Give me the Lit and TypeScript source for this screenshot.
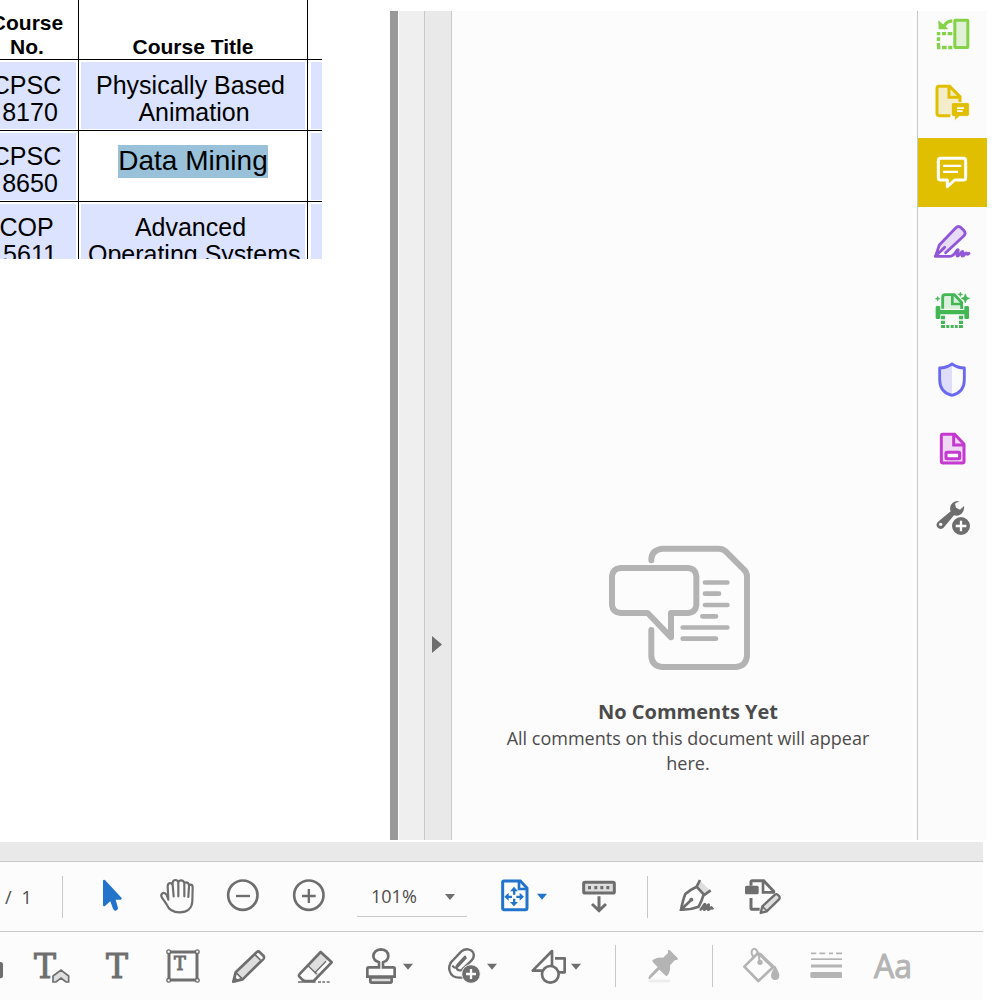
import { LitElement, html, css, svg, nothing, type SVGTemplateResult } from "lit";
import { customElement, property, state } from "lit/decorators.js";

interface Tool {
  label: string;
  icon?: SVGTemplateResult;
  box?: string;
  kind?: "wide" | "edge" | "muted" | "separator" | "zoom" | "glyph";
}

const caret = (x: number, y: number) => svg`<path fill="currentColor" d="M${x} ${y}h30l-15 18z"/>`;

/* ---------- right rail ---------- */

const organize = svg`
  <rect x="134.500" y="60.500" width="39" height="82" rx="2" fill="#e1f1d7" stroke="#85d147" stroke-width="9"/>
  <g stroke="#85d147" stroke-width="10" fill="none">
    <path d="M81 101h10M96 101h12M113 101h14M85.500 97v9M85.500 112v11M85.500 129v10M81 142.500h10M96 142.500h14M115 142.500h12"/>
    <path d="M127 62.500C114 63 107 68 101 80"/>
  </g>
  <path d="M85 61l1 27h30z" fill="#85d147"/>`;

const requestComments = svg`
  <path d="M121 347H87q-6 0-6-7V265q0-6 6-6h32l31 31v16" fill="#f4edcb" stroke="#dfbf00" stroke-width="9"/>
  <path d="M117 259v33h34" fill="none" stroke="#dfbf00" stroke-width="9"/>
  <path d="M129 308h44q5 0 5 5v30q0 6-5 6h-25l-14 13v-13h-5q-5 0-5-6v-30q0-5 5-5z" fill="#dfbf00" stroke="#fbfbfb" stroke-width="2"/>
  <path d="M141 324.500h21M141 333.500h17" stroke="#fff" stroke-width="5"/>`;

const comment = svg`
  <path d="M92 475h68q7 0 7 7v51q0 7-7 7h-26l-22 20v-20H92q-7 0-7-7v-51q0-7 7-7z" fill="none" stroke="#fff" stroke-width="9" stroke-linejoin="round"/>
  <path d="M99 497.500h55M99 515.500h45" stroke="#fff" stroke-width="7"/>`;

const sign = svg`
  <path d="M88 122l50-53q8-9 17-1l7 7q9 8 1 16l-54 53-12-4z" fill="#e6dcf6"/>
  <path d="M77 153l11-33 49-51q8-8 16-1l8 8q8 8 1 16l-55 51M77 153l27-26" fill="none" stroke="#9256d9" stroke-width="8.500" stroke-linejoin="round" stroke-linecap="round"/>
  <path d="M76 154h43c16 0 19-20 24-20 6 0-7 19 0 19 5 0 10-14 14-14 6 0-6 14 1 14 5 0 7-9 11-9 3 0 0 8 8 1" fill="none" stroke="#9256d9" stroke-width="8.500" stroke-linecap="round"/>`;

const scan = svg`
  <path d="M98 311v-34q0-8 8-8h27l22 24v19" fill="#dcefdd" stroke="#43b754" stroke-width="8.500"/>
  <path d="M127 270v27h28" fill="none" stroke="#43b754" stroke-width="8"/>
  <path d="M81 303h6q4 0 4 4v8h72v-8q0-4 4-4h6q4 0 4 4v31q0 4-4 4h-6q-4 0-4-4v-10H91v10q0 4-4 4h-6q-4 0-4-4v-31q0-4 4-4z" fill="#43b754"/>
  <path d="M93 332h12v11H93zM147 332h12v11h-12zM93 347h12v10H93zM147 347h12v10h-12zM93 360h12v9H93zM109 360h9v9h-9zM122 360h9v9h-9zM135 360h8v9h-8zM147 360h12v9h-12z" fill="#43b754"/>
  <path d="M166 266l4 10 9 4-9 4-4 10-4-10-9-4 9-4zM151 261l2 5 5 2-5 2-2 5-2-5-5-2 5-2zM83 274l2 5 5 2-5 2-2 6-2-6-5-2 5-2z" fill="#43b754" stroke="#43b754" stroke-width="1.500"/>`;

const protect = svg`
  <path d="M126 477v95C103 565 89 549 89 524v-36c14 0 27-3 37-11z" fill="#dedefa"/>
  <path d="M126 477c10 7 23 12 37 12v35c0 24-14 41-37 47-23-6-37-23-37-47v-35c14 0 27-5 37-12z" fill="none" stroke="#6a68ee" stroke-width="8.500" stroke-linejoin="round"/>`;

const fillForm = svg`
  <path d="M98 58h36l28 29v52q0 5-5 5H99q-5 0-5-5V63q0-5 4-5z" fill="#efd8f2" stroke="#c439cf" stroke-width="9"/>
  <path d="M131 59v31h32" fill="none" stroke="#c439cf" stroke-width="9"/>
  <rect x="108" y="112" width="41" height="19" rx="3" fill="#fff" stroke="#c439cf" stroke-width="9"/>`;

const moreTools = svg`
  <path d="M148 258q-18-1-25 12-5 10-1 19l-38 31q-8 8-2 17 8 9 18 2l32-38q12 4 22-4 10-9 8-24l-12 11-12-6-3-12z" fill="#6e6e6e"/>
  <circle cx="92" cy="328" r="5" fill="#fbfbfb"/>
  <circle cx="153" cy="333" r="29" fill="#6e6e6e" stroke="#fbfbfb" stroke-width="4"/>
  <path d="M137 333h32M153 317v32" stroke="#fff" stroke-width="7"/>`;

/* ---------- navigation toolbar ---------- */

const pointer = svg`<path d="M310 150q4-2 7 2l48 52q2 4-3 5h-15l7 25q0 6-7 8-5 1-8-6l-8-22-16 14q-6 3-6-4v-70q0-3 1-4z" fill="#2173cc"/>`;
const hand = svg`
  <path d="M505 209l-2-40q0-9 7-10 6 0 8 7v-8q1-8 8-8 8 0 9 8 1-7 9-7 7 0 9 9 1-3 5-3 8 0 9 10 2-3 5-3 6 0 6 9l-1 41c-1 20-15 33-38 33-21 0-33-8-39-24l-14-20q-5-8 1-13 7-4 13 5zM518 165l3 34M535 158v41M553 161v38M567 170l-2 31" fill="#fcfcfc" stroke="#6e6e6e" stroke-width="6.500" stroke-linejoin="round" stroke-linecap="round"/>`;
const zoomOut = svg`
  <circle cx="728.500" cy="195.500" r="44" fill="none" stroke="#6e6e6e" stroke-width="8"/>
  <path d="M708 198h42" stroke="#6e6e6e" stroke-width="7"/>`;
const zoomIn = svg`
  <circle cx="926.500" cy="195.500" r="44" fill="none" stroke="#6e6e6e" stroke-width="8"/>
  <path d="M906 198h41M926.500 177v42" stroke="#6e6e6e" stroke-width="7"/>`;
const fitPage = svg`
  <path d="M492 63h49l20 21v59q0 6-5 6h-64q-4 0-4-4V67q0-4 4-4z" fill="none" stroke="#2173cc" stroke-width="9"/>
  <path d="M537 61v26h27" fill="none" stroke="#2173cc" stroke-width="8"/>
  <path d="M522 80l12 14h-8v10h-7v-10h-9zM522 139l-12-13h9v-10h7v10h8zM493 110l13-12v9h10v7h-10v8zM552 110l-13-12v9h-10v7h10v8z" fill="#2173cc"/>
  <g color="#2173cc">${caret(591, 101)}</g>`;
const keyboard = svg`
  <rect x="731" y="67" width="92" height="32" rx="4" fill="#dedede" stroke="#6e6e6e" stroke-width="9"/>
  <path d="M744 83h9M763 83h9M781 83h9M799 83h9" stroke="#6e6e6e" stroke-width="10"/>
  <path d="M777 109v41M756 132l21 20 21-20" fill="none" stroke="#6e6e6e" stroke-width="9"/>`;
const fountainPen = svg`
  <path d="M208 153l28 27-12 14-28-25z" fill="#dedede"/>
  <path d="M207 150l-10 20q-18 8-34 22-7 17-13 47 28 1 53-9 9-17 14-33l22-16M196 169l25 27M150 239l28-27" fill="none" stroke="#6e6e6e" stroke-width="8"/>
  <circle cx="181" cy="209" r="6" fill="#6e6e6e"/>
  <path d="M206 239c8 0 12-17 15-17 4 0-5 17-1 17 5 0 9-15 12-15 4 0-5 15 0 15s6-7 9-7c2 0-1 7 6 1" fill="none" stroke="#6e6e6e" stroke-width="8"/>`;
const editPage = svg`
  <path d="M360 167v-11q0-4 4-4h34l30 32v6M360 204v30q0 4 4 4h22" fill="none" stroke="#6e6e6e" stroke-width="9"/>
  <path d="M396 152v35h34" fill="none" stroke="#6e6e6e" stroke-width="8"/>
  <rect x="342" y="167" width="41" height="26" rx="5" fill="#6e6e6e"/>
  <path d="M389 249l5-20 38-35q5-4 9 1l3 3q4 5 0 10l-37 36z" fill="#dedede" stroke="#6e6e6e" stroke-width="7" stroke-linejoin="round"/>
  <path d="M394 229l14 14" stroke="#6e6e6e" stroke-width="5"/>`;

/* ---------- comment toolbar ---------- */

const highlighter = svg`<path d="M-12 396H2q7 0 7 7v35q0 7-7 7H-12z" fill="#6e6e6e"/>`;
const insertText = svg`
  <text class="letter" x="135" y="443" font-size="99" text-anchor="middle">T</text>
  <path d="M159 456v-18l24-18 23 18v18h-8l-15-12-15 12z" fill="#dedede" stroke="#6e6e6e" stroke-width="5"/>`;
const addText = svg`<text class="letter" x="351" y="443" font-size="99" text-anchor="middle">T</text>`;
const textBox = svg`
  <rect x="507" y="366" width="84" height="84" fill="none" stroke="#6e6e6e" stroke-width="9"/>
  <g fill="#fff" stroke="#6e6e6e" stroke-width="4"><circle cx="506" cy="365" r="5.500"/><circle cx="592" cy="365" r="5.500"/><circle cx="506" cy="451" r="5.500"/><circle cx="592" cy="451" r="5.500"/></g>
  <text class="letter" x="540" y="420" font-size="53" text-anchor="middle">T</text>`;
const pencil = svg`
  <path d="M700 455l7-28 63-60q5-5 10 0l10 10q4 5 0 10l-62 61z" fill="#dedede" stroke="#6e6e6e" stroke-width="8" stroke-linejoin="round"/>
  <path d="M708 428l18 18-15 4-6-6z" fill="#fcfcfc" stroke="#6e6e6e" stroke-width="5"/>
  <path d="M771 371l16 15" stroke="#fcfcfc" stroke-width="6"/>
  <path d="M765 374l16 16" stroke="#6e6e6e" stroke-width="5"/>
  <path d="M697 458l4-16 12 11z" fill="#6e6e6e"/>`;
const eraser = svg`
  <path d="M923 405l39-38 32 31-44 43z" fill="#dedede"/>
  <path d="M953 428l36-37" stroke="#fcfcfc" stroke-width="10"/>
  <path d="M924 407l26 25M946 427l32-33" fill="none" stroke="#6e6e6e" stroke-width="4"/>
  <path d="M898 433l64-67 33 31-54 56h-25q-6 0-9-4l-9-9q-3-4 0-7z" fill="none" stroke="#6e6e6e" stroke-width="8" stroke-linejoin="round"/>
  <path d="M894 456h53M954 456h9M967 456h8M980 456h9" stroke="#6e6e6e" stroke-width="5"/>`;
const stamp = svg`
  <path d="M117 322v-15q-17-6-17-19 2-19 23-20 21 1 22 20 0 13-16 19v15h31q4 0 4 4v24H82v-24q0-4 4-4z" fill="none" stroke="#6e6e6e" stroke-width="8"/>
  <path d="M91 352h64v12q0 4-4 4H95q-4 0-4-4z" fill="#dedede" stroke="#6e6e6e" stroke-width="8"/>${caret(189, 311)}`;
const attach = svg`
  <path d="M354 313l21-21M377 294l-24 25q-8 8-14 0M336 303q-12 15-7 30 6 20 29 20h10M331 309l33-35q9-7 20-6 14 2 17 14 2 11-6 19l-29 28q-8 5-14-1-5-7 1-14l22-24" fill="none" stroke="#6e6e6e" stroke-width="7" stroke-linecap="round" stroke-linejoin="round"/>
  <circle cx="393" cy="342" r="28" fill="#6e6e6e" stroke="#fcfcfc" stroke-width="3"/>
  <path d="M378 342h30M393 327v30" stroke="#fff" stroke-width="7"/>${caret(441, 311)}`;
const shapes = svg`
  <path d="M636 330v-57l-58 59h30M645 295h29v42h-18" fill="none" stroke="#6e6e6e" stroke-width="8" stroke-linejoin="round"/>
  <circle cx="631" cy="343" r="25" fill="#fcfcfc" stroke="#6e6e6e" stroke-width="8"/>${caret(693, 311)}`;
const pin = svg`
  <path d="M114 361q5-2 8 2l20 20q3 4 0 7h-7l-15 16q3 16-7 30-4 4-8-1l-17-16-28 28h-5l2-9 26-27-14-14q-5-5 0-8 14-8 30-6l15-14z" fill="#b4b4b4"/>
  <path d="M60 453h57" stroke="#ededed" stroke-width="9" stroke-linecap="round"/>`;
const bucket = svg`
  <path d="M384 369l45 43-44 41-42-43z" fill="none" stroke="#b4b4b4" stroke-width="8" stroke-linejoin="round"/>
  <path d="M371 382q-9-12-5-21 7-9 14 0 7 12 9 34" fill="none" stroke="#b4b4b4" stroke-width="6"/>
  <circle cx="390" cy="397" r="8" fill="#b4b4b4"/>
  <path d="M391 367l47 45v10l-48-48z" fill="#b4b4b4"/>
  <path d="M436 408q12 20 12 29 0 12-12 13-13-1-13-13 0-9 13-29z" fill="#b4b4b4"/>`;
const lineWeight = svg`
  <path d="M543 370h16M568 370h18M597 370h12M618 370h18" stroke="#b4b4b4" stroke-width="5"/>
  <path d="M543 387.500h93" stroke="#b4b4b4" stroke-width="5"/>
  <path d="M543 408h93" stroke="#b4b4b4" stroke-width="9"/>
  <rect x="541" y="426" width="95" height="18" rx="4" fill="#b4b4b4"/>`;

const railTools: Tool[] = [
  { label: "Organize Pages", icon: organize, box: "69 45 117 117" },
  { label: "Send for Comments", icon: requestComments, box: "69 252 117 117" },
  { label: "Comment", icon: comment, box: "69 459 117 117" },
  { label: "Fill & Sign", icon: sign, box: "69 51 117 117" },
  { label: "Scan & OCR", icon: scan, box: "69 258 117 117" },
  { label: "Protect", icon: protect, box: "69 465 117 117" },
  { label: "Prepare Form", icon: fillForm, box: "69 42 117 117" },
  { label: "More Tools", icon: moreTools, box: "69 249 117 117" },
];

const navTools: Tool[] = [
  { label: "Select", icon: pointer, box: "273 141 120 117" },
  { label: "Pan", icon: hand, box: "471 141 120 117" },
  { label: "Zoom Out", icon: zoomOut, box: "669 141 120 117" },
  { label: "Zoom In", icon: zoomIn, box: "867 141 120 117" },
  { label: "Zoom level", kind: "zoom" },
  { label: "Fit Page", icon: fitPage, box: "462 51 180 117", kind: "wide" },
  { label: "Show Keyboard", icon: keyboard, box: "717 51 120 117" },
  { label: "", kind: "separator" },
  { label: "Sign", icon: fountainPen, box: "135 141 120 117" },
  { label: "Edit Page", icon: editPage, box: "333 141 120 117" },
];

const commentTools: Tool[] = [
  { label: "Highlight", icon: highlighter, box: "-45 348 54 120", kind: "edge" },
  { label: "Insert Text", icon: insertText, box: "93 348 120 120" },
  { label: "Add Text", icon: addText, box: "291 348 120 120" },
  { label: "Text Box", icon: textBox, box: "489 348 120 120" },
  { label: "Pencil", icon: pencil, box: "687 348 120 120" },
  { label: "Eraser", icon: eraser, box: "885 348 120 120" },
  { label: "Stamp", icon: stamp, box: "60 258 180 120", kind: "wide" },
  { label: "Attach File", icon: attach, box: "312 258 180 120", kind: "wide" },
  { label: "Shapes", icon: shapes, box: "564 258 180 120", kind: "wide" },
  { label: "", kind: "separator" },
  { label: "Keep Tool Selected", icon: pin, box: "42 348 120 120" },
  { label: "", kind: "separator" },
  { label: "Fill Colour", icon: bucket, box: "333 348 120 120" },
  { label: "Line Weight", icon: lineWeight, box: "531 348 120 120" },
  { label: "Text Properties", kind: "glyph" },
];

@customElement("course-table")
class CourseTable extends LitElement {
  static styles = css`
    :host { display: block; overflow: hidden; width: 322px; height: 259px; }
    .courses {
      table-layout: fixed; width: 408px; margin-left: -24px;
      border-spacing: 0; text-align: center; color: #000;
      font: 25px/27px "Liberation Sans", Arial, sans-serif;
    }
    .number { width: 103px; }
    .title { width: 229px; }
    th {
      height: 60px; box-sizing: border-box; padding: 0; vertical-align: bottom;
      font-size: 21px; line-height: 24px; font-weight: bold;
    }
    th, td { border-right: 1px solid #000; border-bottom: 1px solid #000; }
    td { padding: 2px 2px 1px; vertical-align: top; }
    td:last-child { padding-left: 3px; }
    .field { box-sizing: border-box; height: 67px; padding-top: 10px; background: #dbe3ff; white-space: nowrap; }
    .code { padding-right: 1px; }
    .name { padding-right: 5px; }
    .editing { background: none; padding-top: 12px; }
    .selected { display: inline-block; padding-bottom: 2px; background: #99c1da; font-size: 28px; line-height: 31px; }
  `;

  render() {
    return html`<table class="courses">
      <colgroup><col class="number" /><col class="title" /><col /></colgroup>
      <thead><tr><th scope="col">Course<br />No.</th><th scope="col">Course Title</th><th></th></tr></thead>
      <tbody>
        <tr>
          <td><div class="field code">CPSC<br />&nbsp;8170</div></td>
          <td><div class="field name">Physically Based<br />&nbsp;Animation</div></td>
          <td><div class="field"></div></td>
        </tr>
        <tr>
          <td><div class="field code">CPSC<br />&nbsp;8650</div></td>
          <td><div class="field editing"><span class="selected">Data Mining</span></div></td>
          <td><div class="field"></div></td>
        </tr>
        <tr>
          <td><div class="field code">COP<br />&nbsp;5611</div></td>
          <td><div class="field name">Advanced<br />&nbsp;Operating Systems</div></td>
          <td><div class="field"></div></td>
        </tr>
      </tbody>
    </table>`;
  }
}

@customElement("tool-rail")
class ToolRail extends LitElement {
  @state() private active = "Comment";

  static styles = css`
    :host { display: block; overflow: hidden; border-left: 1px solid #c8c8c8; background: #fbfbfb; }
    .tools { display: flex; flex-direction: column; margin-top: -11px; }
    .tool { width: 69px; height: 69px; padding: 0; border: 0; background: none; display: grid; place-items: center; }
    .active { background: #dfbf00; }
    .icon { width: 39px; height: 39px; display: block; }
  `;

  render() {
    return html`<nav class="tools" aria-label="Tools">
      ${railTools.map(
        (t) => html`<button
          class="tool ${t.label === this.active ? "active" : ""}"
          aria-label=${t.label}
          @click=${() => (this.active = t.label)}
        ><svg class="icon" viewBox=${t.box!}>${t.icon}</svg></button>`
      )}
    </nav>`;
  }
}

@customElement("tool-bar")
class ToolBar extends LitElement {
  @property({ attribute: false }) tools: Tool[] = [];

  static styles = css`
    :host {
      display: flex; align-items: center; background: #fcfcfc; color: #6e6e6e;
      font-family: "Open Sans", "Noto Sans", sans-serif;
    }
    .tool { flex: none; width: 66px; height: 66px; padding: 0; border: 0; background: none; color: inherit; display: grid; place-items: center; }
    .icon { display: block; width: 40px; height: var(--icon-height, 40px); }
    .wide { width: 84px; }
    .wide .icon { width: 60px; }
    .edge { width: 18px; justify-items: start; }
    .edge .icon { width: 18px; margin-left: -15px; }
    .separator { flex: none; width: 1px; height: 42px; margin: 0 15px; background: #c8c8c8; }
    .letter { font-family: "DejaVu Serif", serif; fill: #6e6e6e; stroke: #6e6e6e; stroke-width: 3px; }
    .glyph { color: #b4b4b4; font: 32px/40px "Open Sans", sans-serif; -webkit-text-stroke: 1px #b4b4b4; }
    .zoom { position: relative; flex: none; width: 110px; margin: 0 15px; color: #6e6e6e; }
    .level {
      appearance: none; display: block; width: 100%; height: 40px; padding: 0 14px; border: 0;
      border-bottom: 1px solid #c8c8c8; border-radius: 0; background: none;
      font: 18px/39px "Open Sans", sans-serif; color: #4b4b4b;
    }
    .arrow { position: absolute; right: 12px; top: 17px; width: 10px; height: 6px; pointer-events: none; }
  `;

  private renderTool(t: Tool) {
    if (t.kind === "separator") return html`<span class="separator" role="separator"></span>`;
    if (t.kind === "zoom")
      return html`<div class="zoom">
        <select class="level" aria-label=${t.label}>
          <option>101%</option><option>125%</option><option>150%</option>
        </select>
        <svg class="arrow" viewBox="0 0 30 18">${caret(0, 0)}</svg>
      </div>`;
    if (t.kind === "glyph") return html`<button class="tool glyph" aria-label=${t.label}>Aa</button>`;
    return html`<button class="tool ${t.kind ?? ""}" aria-label=${t.label}>
      <svg class="icon" viewBox=${t.box ?? nothing}>${t.icon}</svg>
    </button>`;
  }

  render() {
    return html`<slot></slot>${this.tools.map((t) => this.renderTool(t))}`;
  }
}

@customElement("comments-panel")
class CommentsPanel extends LitElement {
  static styles = css`
    :host {
      display: flex; flex-direction: column; align-items: center; justify-content: flex-end;
      box-sizing: border-box; padding: 0 0 64px 7px; background: #fcfcfc; color: #4b4b4b; text-align: center;
      font: 18px/25px "Open Sans", "Noto Sans", sans-serif;
    }
    .art { width: 160px; height: 128px; margin-bottom: 26px; }
    .heading { margin: 0 0 1px; font-size: 20px; line-height: 27px; font-weight: bold; }
    .message { margin: 0; max-width: 400px; }
  `;

  render() {
    return html`
      <svg class="art" viewBox="54 42 480 384" fill="none" stroke="#b3b3b3" stroke-linecap="round" aria-hidden="true">
        <g stroke-width="18" stroke-linejoin="round">
          <path d="M184 91v-4q1-27 33-31H387q11 0 20 8l54 54q10 9 10 22V378q-3 30-33 33H217q-31-3-33-33V300" />
          <path d="M92 114H295q22 2 24 24v87q-2 22-24 24H243v73l-70-73H92q-24-2-26-24v-87q2-22 26-24z" />
        </g>
        <path d="M345 157.500h67M345 191h42M345 225h67M337 259h41M278 292.500h134M278 326h100" stroke-width="14" />
      </svg>
      <h2 class="heading">No Comments Yet</h2>
      <p class="message">All comments on this document will appear here.</p>
    `;
  }
}

@customElement("app-root")
class AppRoot extends LitElement {
  static styles = css`
    :host { display: flex; flex-direction: column; min-height: 100vh; background: #fff; }
    .workspace { flex: 1; display: flex; }
    .document { flex: 0 0 39%; overflow: hidden; }
    .panes { flex: 1; display: flex; min-width: 0; margin: 11px 13px 2px 0; }
    .scrollbar { flex: none; width: 8px; background: #999; }
    .gutter { flex: none; width: 25px; margin-left: 1px; background: #efefef; }
    .collapse {
      flex: none; box-sizing: border-box; width: 28px; padding: 0 0 187px 7px; background: #e9e9e9;
      border: solid #c8c8c8; border-width: 0 1px; display: flex; align-items: flex-end;
    }
    .triangle { display: block; width: 10px; height: 17px; }
    .comments { flex: 1; min-width: 0; }
    .rail { flex: none; }
    .bars { margin-right: 17px; }
    .band { height: 19px; background: #e9e9e9; border-bottom: 1px solid #c8c8c8; }
    .navigation { height: 69px; border-bottom: 1px solid #c8c8c8; --icon-height: 39px; }
    .markup { height: 68px; }
    .pages {
      box-sizing: border-box; width: 62px; padding-left: 5px; display: flex; gap: 10px;
      color: #4b4b4b; font: 18px/40px "Open Sans", sans-serif;
    }
    .rule { width: 1px; height: 42px; margin-right: 15px; background: #c8c8c8; }
  `;

  render() {
    return html`
      <main class="workspace">
        <section class="document"><course-table></course-table></section>
        <div class="panes">
          <div class="scrollbar"></div>
          <div class="gutter"></div>
          <button class="collapse" aria-label="Collapse panel">
            <svg class="triangle" viewBox="0 0 10 17"><path d="M0 0l10 8.500-10 8.500z" fill="#6e6e6e" /></svg>
          </button>
          <comments-panel class="comments"></comments-panel>
          <tool-rail class="rail"></tool-rail>
        </div>
      </main>
      <footer class="bars">
        <div class="band"></div>
        <tool-bar class="navigation" .tools=${navTools}>
          <span class="pages"><span>/</span><span>1</span></span><span class="rule"></span>
        </tool-bar>
        <tool-bar class="markup" .tools=${commentTools}></tool-bar>
      </footer>
    `;
  }
}
